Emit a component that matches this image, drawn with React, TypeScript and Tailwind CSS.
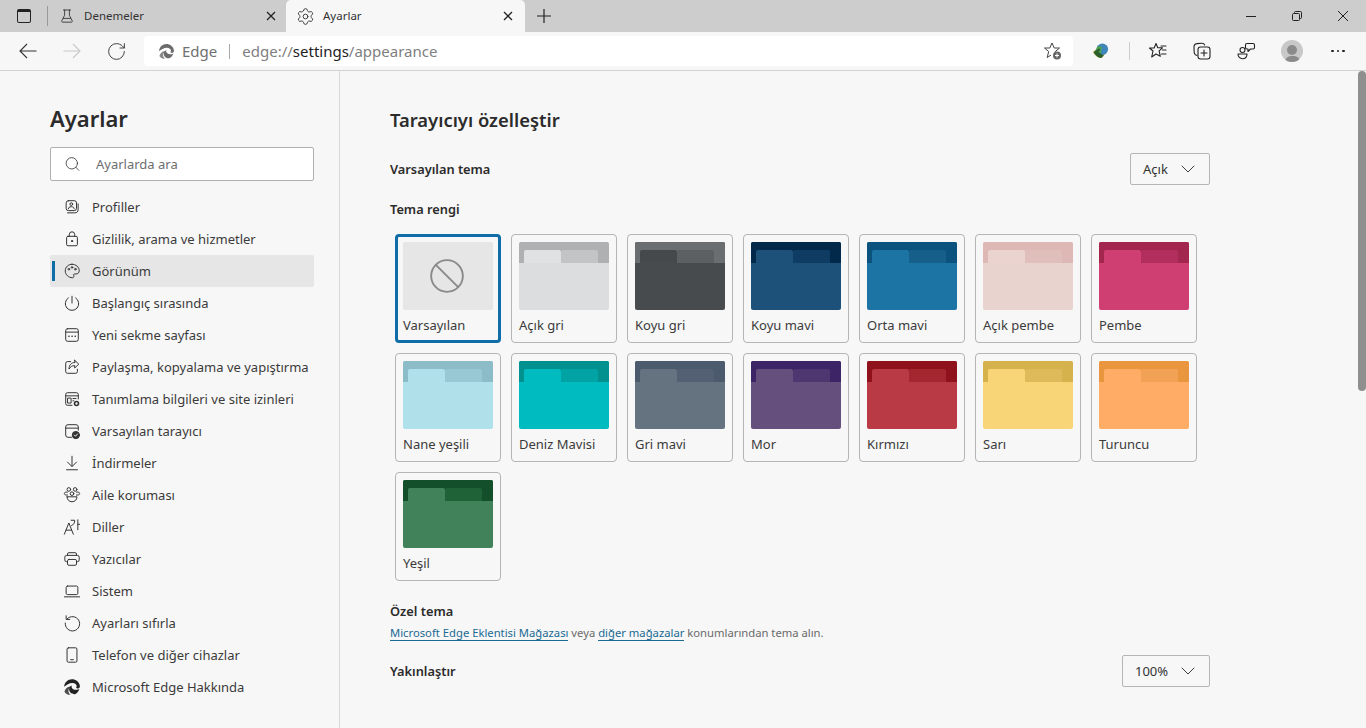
import type { ReactNode } from "react";
import { Settings, ChevronDown, Search, Ban, RotateCw } from "lucide-react";

function Ico({ children, size = 20, className }: { children: ReactNode; size?: number; className?: string }) {
  return (
    <svg viewBox="0 0 20 20" width={size} height={size} fill="none" stroke="currentColor" strokeWidth="1.1" strokeLinecap="round" strokeLinejoin="round" className={className}>
      {children}
    </svg>
  );
}

function EdgeLogo({ className }: { className?: string }) {
  return (
    <svg viewBox="0 0 24 24" className={className} fill="currentColor">
      <path d="M21.8 14.600c-.3.2-.7.3-1 .4-1 .5-2.200.8-3.400.8-3.200 0-6-2.200-6-4.300 0-.6.4-1.100.9-1.400-3.300.1-4.100 3.100-4.100 4.900 0 5 4.600 6.500 6.600 6.500.5 0 1.300-.2 1.800-.3 2.400-.9 4.200-3.600 5.200-6.600z" />
      <path d="M10.300 22.300c-.9-.4-1.500-1-2-1.700-1.800-2.500-1.300-6 1.200-7.900.300-.2.500-.4.800-.5.200-.1.500-.2.800-.2-.5-.3-1.600-.5-2.300-.4-2.900.2-4.700 2.200-5.800 4.200-.6 1.100-1 2-1 2.400 1.300 2.500 4.900 4.600 8.300 4.100z" opacity="0.8" />
      <path d="M1.500 11.600C1.900 5.900 6.400 1.500 12 1.500c4.800 0 10 3.500 10.500 9 .1 1.200-.3 2.500-1.600 3.100-1.100.5-2.700.4-3.200-.3-.3-.3-.2-.6 0-1 .2-.3.600-.8.600-1.500 0-1.900-2.400-4-5.700-4-4.500 0-8.100 2.800-11.100 4.800z" />
    </svg>
  );
}

const ICONS: Record<string, ReactNode> = {
  "Profiller": (
    <>
      <rect x="3.500" y="3" width="11.500" height="11" rx="2.500" />
      <circle cx="9.200" cy="6.800" r="1.500" />
      <path d="M6 12c0-1.500 1-2.300 3.200-2.300s3.200.8 3.200 2.300" />
      <path d="M5 16.500h8c2.500 0 3.800-1.300 3.800-3.500V6.500" />
    </>
  ),
  "Gizlilik, arama ve hizmetler": (
    <>
      <rect x="4" y="7" width="12" height="10.500" rx="1.500" />
      <path d="M7 7V5a3 3 0 0 1 6 0v2" />
      <circle cx="10" cy="12.300" r="0.700" fill="currentColor" />
    </>
  ),
  "Görünüm": (
    <>
      <path d="M10 2.500c4.500 0 8 3.200 8 7.200 0 2.300-1.600 3.600-3.600 3.600h-1.500c-1 0-1.500.8-1 1.700.5 1 .1 2.500-1.400 2.500-4.300 0-8-3.400-8-7.600 0-4.400 3.500-7.400 7.500-7.400z" />
      <circle cx="6.500" cy="8" r="0.900" />
      <circle cx="10" cy="6" r="0.900" />
      <circle cx="13.700" cy="8" r="0.900" />
    </>
  ),
  "Başlangıç sırasında": (
    <>
      <path d="M10 2.500v7.500" />
      <path d="M6 4.300a7.500 7.500 0 1 0 8 0" />
    </>
  ),
  "Yeni sekme sayfası": (
    <>
      <rect x="3" y="3" width="14" height="14" rx="2" />
      <path d="M3 6.800h14" />
      <path d="M6.500 11.500h.2M10 11.500h.2M13.500 11.500h.2" strokeWidth="1.700" />
    </>
  ),
  "Paylaşma, kopyalama ve yapıştırma": (
    <>
      <path d="M8.500 4H5a2 2 0 0 0-2 2v9a2 2 0 0 0 2 2h9a2 2 0 0 0 2-2v-2.500" />
      <path d="M13 2.500l4.500 4.300-4.500 4.300V8.500c-3 0-5 1.200-6.300 3.800 0-4.500 2.300-7.300 6.300-7.300z" />
    </>
  ),
  "Tanımlama bilgileri ve site izinleri": (
    <>
      <path d="M10 17H5a2 2 0 0 1-2-2V5a2 2 0 0 1 2-2h10a2 2 0 0 1 2 2v5" />
      <path d="M3 6.500h14" />
      <rect x="5.500" y="9" width="3.500" height="5.500" />
      <path d="M11 9.500h3.500M11 12h1" />
      <circle cx="15" cy="15" r="2.200" strokeWidth="1.800" />
    </>
  ),
  "Varsayılan tarayıcı": (
    <>
      <path d="M9.500 17H5.500a2.500 2.500 0 0 1-2.500-2.500v-9A2.500 2.500 0 0 1 5.500 3h9A2.500 2.500 0 0 1 17 5.500V9" />
      <path d="M3 6.800h14" />
      <circle cx="14.300" cy="14.500" r="4" fill="currentColor" />
      <path d="M12.600 14.500l1.300 1.300 2.200-2.500" stroke="#f7f7f7" />
    </>
  ),
  "İndirmeler": (
    <>
      <path d="M10 2.500v11" />
      <path d="M5 9l5 5 5-5" />
      <path d="M4 17.500h12" />
    </>
  ),
  "Aile koruması": (
    <>
      <circle cx="6.500" cy="3.800" r="2" />
      <circle cx="13.500" cy="3.800" r="2" />
      <circle cx="10" cy="8.500" r="2" />
      <path d="M5 10H3.500C2.500 10 1.500 9.500 1.500 8.300c0-1 .8-1.500 2-1.500h1.500" />
      <path d="M15 10h1.500c1 0 2-.5 2-1.700 0-1-.8-1.500-2-1.500H15" />
      <path d="M4.500 12h11c0 3.500-2.500 5.500-5.500 5.500S4.500 15.500 4.500 12z" />
    </>
  ),
  "Diller": (
    <>
      <path d="M1.500 18L6.500 5.500 11.500 18" />
      <path d="M3.500 13.500h6" />
      <path d="M9 2.500h4c0 3-1.200 5-3.500 6" />
      <path d="M16.500 2v11M16.500 7h2" />
    </>
  ),
  "Yazıcılar": (
    <>
      <path d="M5 13H4a2 2 0 0 1-2-2V8a2 2 0 0 1 2-2h12a2 2 0 0 1 2 2v3a2 2 0 0 1-2 2h-1" />
      <path d="M5 6V4.500A1.500 1.500 0 0 1 6.500 3h7A1.500 1.500 0 0 1 15 4.500V6" />
      <rect x="5" y="10.500" width="10" height="6.500" rx="1.500" />
    </>
  ),
  "Sistem": (
    <>
      <rect x="3.500" y="4.500" width="13" height="9.500" rx="1.500" />
      <path d="M1.500 16.500h17" />
    </>
  ),
  "Ayarları sıfırla": (
    <>
      <path d="M4.500 5.500A8 8 0 1 1 2.500 10" />
      <path d="M3.500 2v4h4" />
    </>
  ),
  "Telefon ve diğer cihazlar": (
    <>
      <rect x="4.500" y="2" width="11" height="16" rx="1.500" />
      <path d="M8.500 15.200h3" />
    </>
  ),
};

const NAV = [
  "Profiller",
  "Gizlilik, arama ve hizmetler",
  "Görünüm",
  "Başlangıç sırasında",
  "Yeni sekme sayfası",
  "Paylaşma, kopyalama ve yapıştırma",
  "Tanımlama bilgileri ve site izinleri",
  "Varsayılan tarayıcı",
  "İndirmeler",
  "Aile koruması",
  "Diller",
  "Yazıcılar",
  "Sistem",
  "Ayarları sıfırla",
  "Telefon ve diğer cihazlar",
  "Microsoft Edge Hakkında",
];

const THEMES = [
  { name: "Açık gri", top: "#aeb0b2", tab: "#e0e1e2", tab2: "#c2c4c5", body: "#dcdddf" },
  { name: "Koyu gri", top: "#6b6e71", tab: "#46494c", tab2: "#5d6063", body: "#484b4e" },
  { name: "Koyu mavi", top: "#03294a", tab: "#1d5179", tab2: "#0f3c62", body: "#1d5179" },
  { name: "Orta mavi", top: "#0b527e", tab: "#1c74a5", tab2: "#165f8b", body: "#1c74a5" },
  { name: "Açık pembe", top: "#deb8b4", tab: "#ebd3cf", tab2: "#e0bfba", body: "#e9d3cf" },
  { name: "Pembe", top: "#a3264f", tab: "#cf3f72", tab2: "#b22e5c", body: "#cf3f72" },
  { name: "Nane yeşili", top: "#8cbcc8", tab: "#b0e0ea", tab2: "#98c8d3", body: "#b0e0ea" },
  { name: "Deniz Mavisi", top: "#03918f", tab: "#00bbbf", tab2: "#02a3a5", body: "#00bbbf" },
  { name: "Gri mavi", top: "#4c5a6e", tab: "#65727f", tab2: "#536074", body: "#65727f" },
  { name: "Mor", top: "#3d2466", tab: "#654f7d", tab2: "#4e3670", body: "#654f7d" },
  { name: "Kırmızı", top: "#8f111c", tab: "#b93a45", tab2: "#a4262f", body: "#b93a45" },
  { name: "Sarı", top: "#d6b24d", tab: "#f8d677", tab2: "#dfba5a", body: "#f8d677" },
  { name: "Turuncu", top: "#ea963e", tab: "#ffad66", tab2: "#f2a255", body: "#ffad66" },
  { name: "Yeşil", top: "#124f2a", tab: "#41825a", tab2: "#1f6238", body: "#41825a" },
];

function ThemeTile({ name, top, tab, tab2, body }: { name: string; top: string; tab: string; tab2: string; body: string }) {
  return (
    <div className="w-[106px] h-[109px] rounded-[4px] border border-[#b5b5b5] p-[7px] flex flex-col">
      <div className="h-[68px] shrink-0 rounded-[2px] overflow-hidden flex flex-col" style={{ backgroundColor: body }}>
        <div className="h-[21px] pt-[8px] pl-[5px] flex shrink-0" style={{ backgroundColor: top }}>
          <div className="w-[37px] rounded-t-[2px]" style={{ backgroundColor: tab }} />
          <div className="w-[37px] rounded-t-[2px]" style={{ backgroundColor: tab2 }} />
        </div>
      </div>
      <div className="mt-[5px] text-[13px] leading-[20px] text-[#3b3b3b]">{name}</div>
    </div>
  );
}

function TabClose() {
  return (
    <svg viewBox="0 0 10 10" width={10} height={10} fill="none" stroke="#222" strokeWidth="1.300" className="ml-auto">
      <path d="M1 1l8 8M9 1l-8 8" />
    </svg>
  );
}

function Slot({ children, className }: { children: ReactNode; className?: string }) {
  return <div className={`w-[44px] h-[30px] flex items-center justify-center shrink-0 ${className ?? ""}`}>{children}</div>;
}

export default function App() {
  return (
    <div className="w-[1366px] h-[728px] overflow-hidden flex flex-col bg-[#f7f7f7] font-['Noto_Sans','Open_Sans',sans-serif] text-[#333]">
      {/* tab strip */}
      <div className="h-[32px] bg-[#cdcdcd] flex shrink-0">
        <div className="w-[47px] flex items-center pl-[17px]">
          <div className="w-[14px] h-[14px] rounded-[2px] border-[1.5px] border-[#222] border-t-[3px]" />
        </div>
        <div className="w-[239px] flex items-center pr-[10px]">
          <div className="w-px h-[20px] bg-[#999]" />
          <Ico size={16} className="ml-[11px] text-[#333]">
            <path d="M5.500 2.500h9M7 2.500v6.500L3.500 16c-.4 1 .1 1.700 1 1.700h11c.9 0 1.400-.7 1-1.700L13 9V2.500M5.500 13h9" />
          </Ico>
          <span className="ml-[9px] text-[11.5px] text-[#333]">Denemeler</span>
          <TabClose />
        </div>
        <div className="w-[239px] bg-[#f7f7f7] rounded-t-[5px] flex items-center pl-[10px] pr-[12px]">
          <Settings size={19} strokeWidth={1.150} className="text-[#333]" />
          <span className="ml-[8px] text-[11.5px] text-[#333]">Ayarlar</span>
          <TabClose />
        </div>
        <div className="w-[38px] flex items-center justify-center">
          <svg viewBox="0 0 16 16" width={16} height={16} fill="none" stroke="#222" strokeWidth="1.200"><path d="M8 1v14M1 8h14" /></svg>
        </div>
        <div className="ml-auto flex items-center text-[#222]">
          <svg viewBox="0 0 12 12" width={12} height={12} fill="none" stroke="currentColor" className="mr-[34px]"><path d="M1 6.500h10" /></svg>
          <svg viewBox="0 0 12 12" width={12} height={12} fill="none" stroke="currentColor" className="mr-[34px]"><rect x="1.500" y="3.500" width="7" height="7" rx="1" /><path d="M3.500 3V2.500a1 1 0 0 1 1-1h5a1 1 0 0 1 1 1v5a1 1 0 0 1-1 1H9" /></svg>
          <svg viewBox="0 0 12 12" width={12} height={12} fill="none" stroke="currentColor" className="mr-[17px]"><path d="M1 1l10 10M11 1L1 11" /></svg>
        </div>
      </div>
      {/* toolbar */}
      <div className="h-[39px] bg-[#f7f7f7] border-b border-[#d2d2d2] flex items-center pl-[6px] shrink-0">
        <Slot>
          <svg viewBox="0 0 18 16" width={18} height={16} fill="none" stroke="#333" strokeWidth="1.100"><path d="M17.500 8H1M8 1L1 8l7 7" /></svg>
        </Slot>
        <Slot>
          <svg viewBox="0 0 18 16" width={18} height={16} fill="none" stroke="#c8c8c8" strokeWidth="1.100"><path d="M.5 8H17M10 1l7 7-7 7" /></svg>
        </Slot>
        <Slot><RotateCw size={21} strokeWidth={1.050} className="text-[#333]" /></Slot>
        <div className="ml-[6px] w-[929px] h-[30px] bg-white rounded-[4px] flex items-center pl-[14px] pr-[10px] shrink-0">
          <EdgeLogo className="w-[17px] h-[17px] text-[#6b6b6b]" />
          <span className="ml-[7px] text-[15px] text-[#707070]">Edge</span>
          <div className="mx-[12px] w-px h-[15px] bg-[#aaa]" />
          <span className="text-[15px] text-[#808080]">edge://<span className="text-[#222]">settings</span>/appearance</span>
          <svg viewBox="0 0 20 20" width={20} height={20} fill="none" stroke="#444" strokeWidth="1" className="ml-auto">
            <path d="M9 2l2.200 5h5.300l-4.200 3.500 1 3M9 2L6.800 7H1.500l4.200 3.500-1.500 6 3.800-2.500" />
            <circle cx="14" cy="14.500" r="4" fill="#666" stroke="none" />
            <path d="M14 12.500v4M12 14.500h4" stroke="#fff" />
          </svg>
        </div>
        <div className="w-[56px] flex justify-center shrink-0">
          <svg viewBox="0 0 20 18" width={18} height={16}>
            <path d="M1 10l6-5 7 8-3 4C7 17 3 14 1 10z" fill="#8f9a2e" />
            <circle cx="11.500" cy="7" r="6.500" fill="#3f86b8" />
            <path d="M6 4l5 0-1 7-4 2C4 11 4 7 6 4z" fill="#4ea34e" />
            <path d="M2 10l6-4 1 2-2 2 6 4-3 3C6 16 3 13 2 10z" fill="#2c5d2c" />
          </svg>
        </div>
        <div className="w-px h-[18px] bg-[#ccc]" />
        <Slot className="ml-[6px]">
          <Ico size={20} className="text-[#222]">
            <path d="M8 2.500l1.800 4.300h4.700l-3.400 3 1.200 5.500L8 13l-4.300 3 1.300-6-3.500-3h4.700z" />
            <path d="M13 5h5M14.500 9H18M13.500 13H18" />
          </Ico>
        </Slot>
        <Slot>
          <Ico size={20} className="text-[#222]">
            <path d="M5 14.500c-1.800-.3-2.600-1.500-2.800-3L2 6.300C1.900 4 3 2.800 5 2.600l4.700-.4c1.500-.1 2.500.6 2.900 1.800" />
            <rect x="6" y="6" width="12" height="12" rx="2.500" />
            <path d="M12 9v6M9 12h6" />
          </Ico>
        </Slot>
        <Slot>
          <Ico size={20} className="text-[#222]">
            <circle cx="6.500" cy="9" r="2.500" />
            <path d="M2 13h9c0 3-2 4.700-4.500 4.700S2 16 2 13z" />
            <path d="M11 2.500h6a1.500 1.500 0 0 1 1.500 1.500v2.500A1.500 1.500 0 0 1 17 8h-2.500L12 10.500V8h-1a1.500 1.500 0 0 1-1.500-1.500V4A1.500 1.500 0 0 1 11 2.500z" />
          </Ico>
        </Slot>
        <Slot className="ml-[2px]">
          <div className="w-[22px] h-[22px] rounded-full bg-[#c8c8c8] flex flex-col items-center justify-end overflow-hidden">
            <div className="w-[10px] h-[10px] rounded-full bg-[#8b8b8b]" />
            <div className="mt-[1px] w-[15px] h-[6px] rounded-t-full bg-[#8b8b8b]" />
          </div>
        </Slot>
        <Slot className="ml-[2px]">
          <div className="flex gap-[3px]">
            <div className="w-[2.500px] h-[2.500px] rounded-full bg-[#222]" />
            <div className="w-[2.500px] h-[2.500px] rounded-full bg-[#222]" />
            <div className="w-[2.500px] h-[2.500px] rounded-full bg-[#222]" />
          </div>
        </Slot>
      </div>
      {/* page */}
      <div className="flex flex-1 min-h-0 relative">
        <aside className="w-[340px] border-r border-[#d9d9d9] pl-[50px] pr-[25px] shrink-0">
          <h1 className="mt-[30px] text-[22px] leading-[34px] font-semibold text-[#2b2b2b]">Ayarlar</h1>
          <div className="mt-[12px] w-[264px] h-[34px] border border-[#b0b0b0] rounded-[2px] bg-white flex items-center pl-[13px]">
            <Search size={17} strokeWidth={1.150} className="text-[#333] translate-y-[-0.500px]" />
            <span className="ml-[15px] pt-[2px] text-[13px] text-[#6e6e6e]">Ayarlarda ara</span>
          </div>
          <nav className="mt-[10px] w-[264px]">
            {NAV.map((label) => {
              const active = label === "Görünüm";
              return (
                <div key={label} className={`h-[32px] flex items-center relative rounded-[2px] ${active ? "bg-[#e6e6e6]" : ""}`}>
                  {active && <div className="absolute left-[2px] top-[6px] w-[3px] h-[20px] bg-[#0f6ea8]" />}
                  {label === "Microsoft Edge Hakkında" ? (
                    <EdgeLogo className="ml-[13px] mr-[1px] w-[18px] h-[18px] text-[#222]" />
                  ) : (
                    <Ico size={18} className="ml-[13px] mr-[1px] text-[#333]">{ICONS[label]}</Ico>
                  )}
                  <span className="ml-[10px] pt-[2px] text-[13px] text-[#3b3b3b] whitespace-nowrap">{label}</span>
                </div>
              );
            })}
          </nav>
        </aside>
        <main className="flex-1 pl-[50px] pr-[156px]">
          <h2 className="mt-[35px] text-[18.400px] leading-[28px] font-semibold text-[#2b2b2b]">Tarayıcıyı özelleştir</h2>
          <div className="mt-[19px] flex items-center justify-between h-[32px]">
            <span className="pt-[2px] text-[12.800px] font-semibold text-[#2b2b2b]">Varsayılan tema</span>
            <div className="w-[80px] h-[32px] border border-[#b5b5b5] rounded-[2px] flex items-center pl-[12px] text-[13px] text-[#333]">
              <span className="pt-[2px]">Açık</span><ChevronDown size={24} strokeWidth={0.950} className="ml-auto mr-[9px]" />
            </div>
          </div>
          <div className="mt-[14px] text-[12.800px] leading-[20px] font-semibold text-[#2b2b2b]">Tema rengi</div>
          <div className="mt-[15px] ml-[5px] grid grid-cols-[repeat(7,106px)] gap-x-[10px] gap-y-[10px]">
            <div className="w-[106px] h-[109px] rounded-[4px] border-[3px] border-[#0f6ea8] p-[5px] flex flex-col">
              <div className="h-[68px] shrink-0 rounded-[2px] bg-[#e6e6e6] flex items-center justify-center">
                <Ban size={38} strokeWidth={1.200} className="text-[#8a8a8a] -translate-x-[1px]" />
              </div>
              <div className="mt-[5px] text-[13px] leading-[20px] text-[#3b3b3b]">Varsayılan</div>
            </div>
            {THEMES.map((t) => <ThemeTile key={t.name} {...t} />)}
          </div>
          <div className="mt-[20px] text-[12.800px] leading-[20px] font-semibold text-[#2b2b2b]">Özel tema</div>
          <div className="mt-[4px] text-[11.250px] leading-[16px] text-[#6a6a6a]">
            <span className="text-[#1a6a94] border-b border-[#1a6a94]">Microsoft Edge Eklentisi Mağazası</span> veya <span className="text-[#1a6a94] border-b border-[#1a6a94]">diğer mağazalar</span> konumlarından tema alın.
          </div>
          <div className="mt-[14px] flex items-center justify-between h-[32px]">
            <span className="pt-[2px] text-[12.800px] font-semibold text-[#2b2b2b]">Yakınlaştır</span>
            <div className="w-[88px] h-[32px] border border-[#b5b5b5] rounded-[2px] flex items-center pl-[12px] text-[13px] text-[#333]">
              <span className="pt-[2px]">100%</span><ChevronDown size={24} strokeWidth={0.950} className="ml-auto mr-[9px]" />
            </div>
          </div>
        </main>
        <div className="absolute right-0 top-0 bottom-0 w-[8px]">
          <div className="w-[8px] h-[320px] rounded-full bg-[#8f8f8f]" />
        </div>
      </div>
    </div>
  );
}
